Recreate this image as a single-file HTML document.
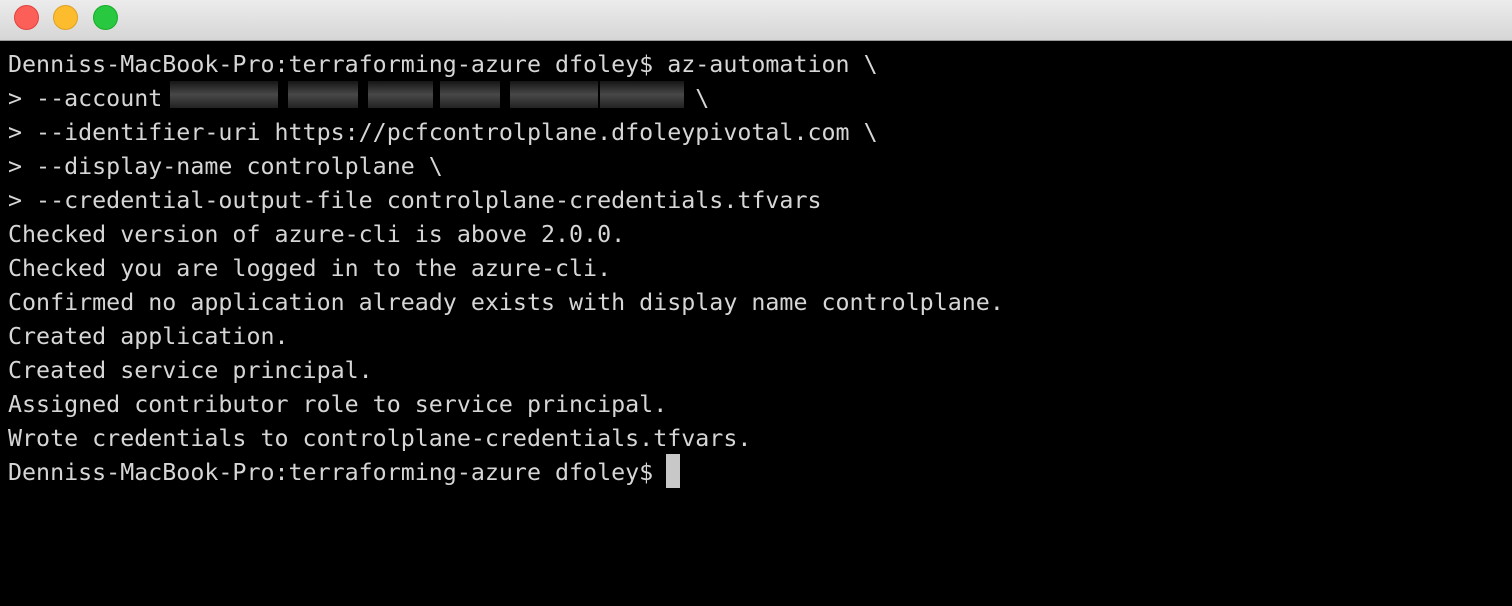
<!DOCTYPE html>
<html><head><meta charset="utf-8"><style>
html,body{margin:0;padding:0;background:#000;width:1512px;height:606px;overflow:hidden}
.bar{position:absolute;left:0;top:0;width:1512px;height:40px;background:linear-gradient(#ececec,#d6d6d6);border-bottom:1px solid #9a9a9a}
.dot{position:absolute;top:5px;width:23px;height:23px;border-radius:50%}
pre{position:absolute;left:8px;top:48px;margin:0;font-family:"DejaVu Sans Mono","Liberation Mono",monospace;font-size:23.3px;line-height:34px;color:#d6d6d6}
.blur{position:absolute;top:81px;height:27px;background:linear-gradient(#151515,#484848 50%,#222)}
.cur{position:absolute;left:666px;top:454px;width:14px;height:34px;background:#c8c8c8}
</style></head><body>
<div class="bar">
<div class="dot" style="left:14px;background:#fc5f57;border:0.5px solid #e0443e"></div>
<div class="dot" style="left:53px;background:#fdbc2e;border:0.5px solid #dea123"></div>
<div class="dot" style="left:93px;background:#28c840;border:0.5px solid #1aab29"></div>
</div>
<pre>Denniss-MacBook-Pro:terraforming-azure dfoley$ az-automation \
&gt; --account                                      \
&gt; --identifier-uri https://pcfcontrolplane.dfoleypivotal.com \
&gt; --display-name controlplane \
&gt; --credential-output-file controlplane-credentials.tfvars
Checked version of azure-cli is above 2.0.0.
Checked you are logged in to the azure-cli.
Confirmed no application already exists with display name controlplane.
Created application.
Created service principal.
Assigned contributor role to service principal.
Wrote credentials to controlplane-credentials.tfvars.
Denniss-MacBook-Pro:terraforming-azure dfoley$ </pre>
<div class="blur" style="left:170px;width:108px"></div>
<div class="blur" style="left:288px;width:70px"></div>
<div class="blur" style="left:368px;width:65px"></div>
<div class="blur" style="left:440px;width:60px"></div>
<div class="blur" style="left:510px;width:88px"></div>
<div class="blur" style="left:600px;width:84px"></div>
<div class="cur"></div>
</body></html>
